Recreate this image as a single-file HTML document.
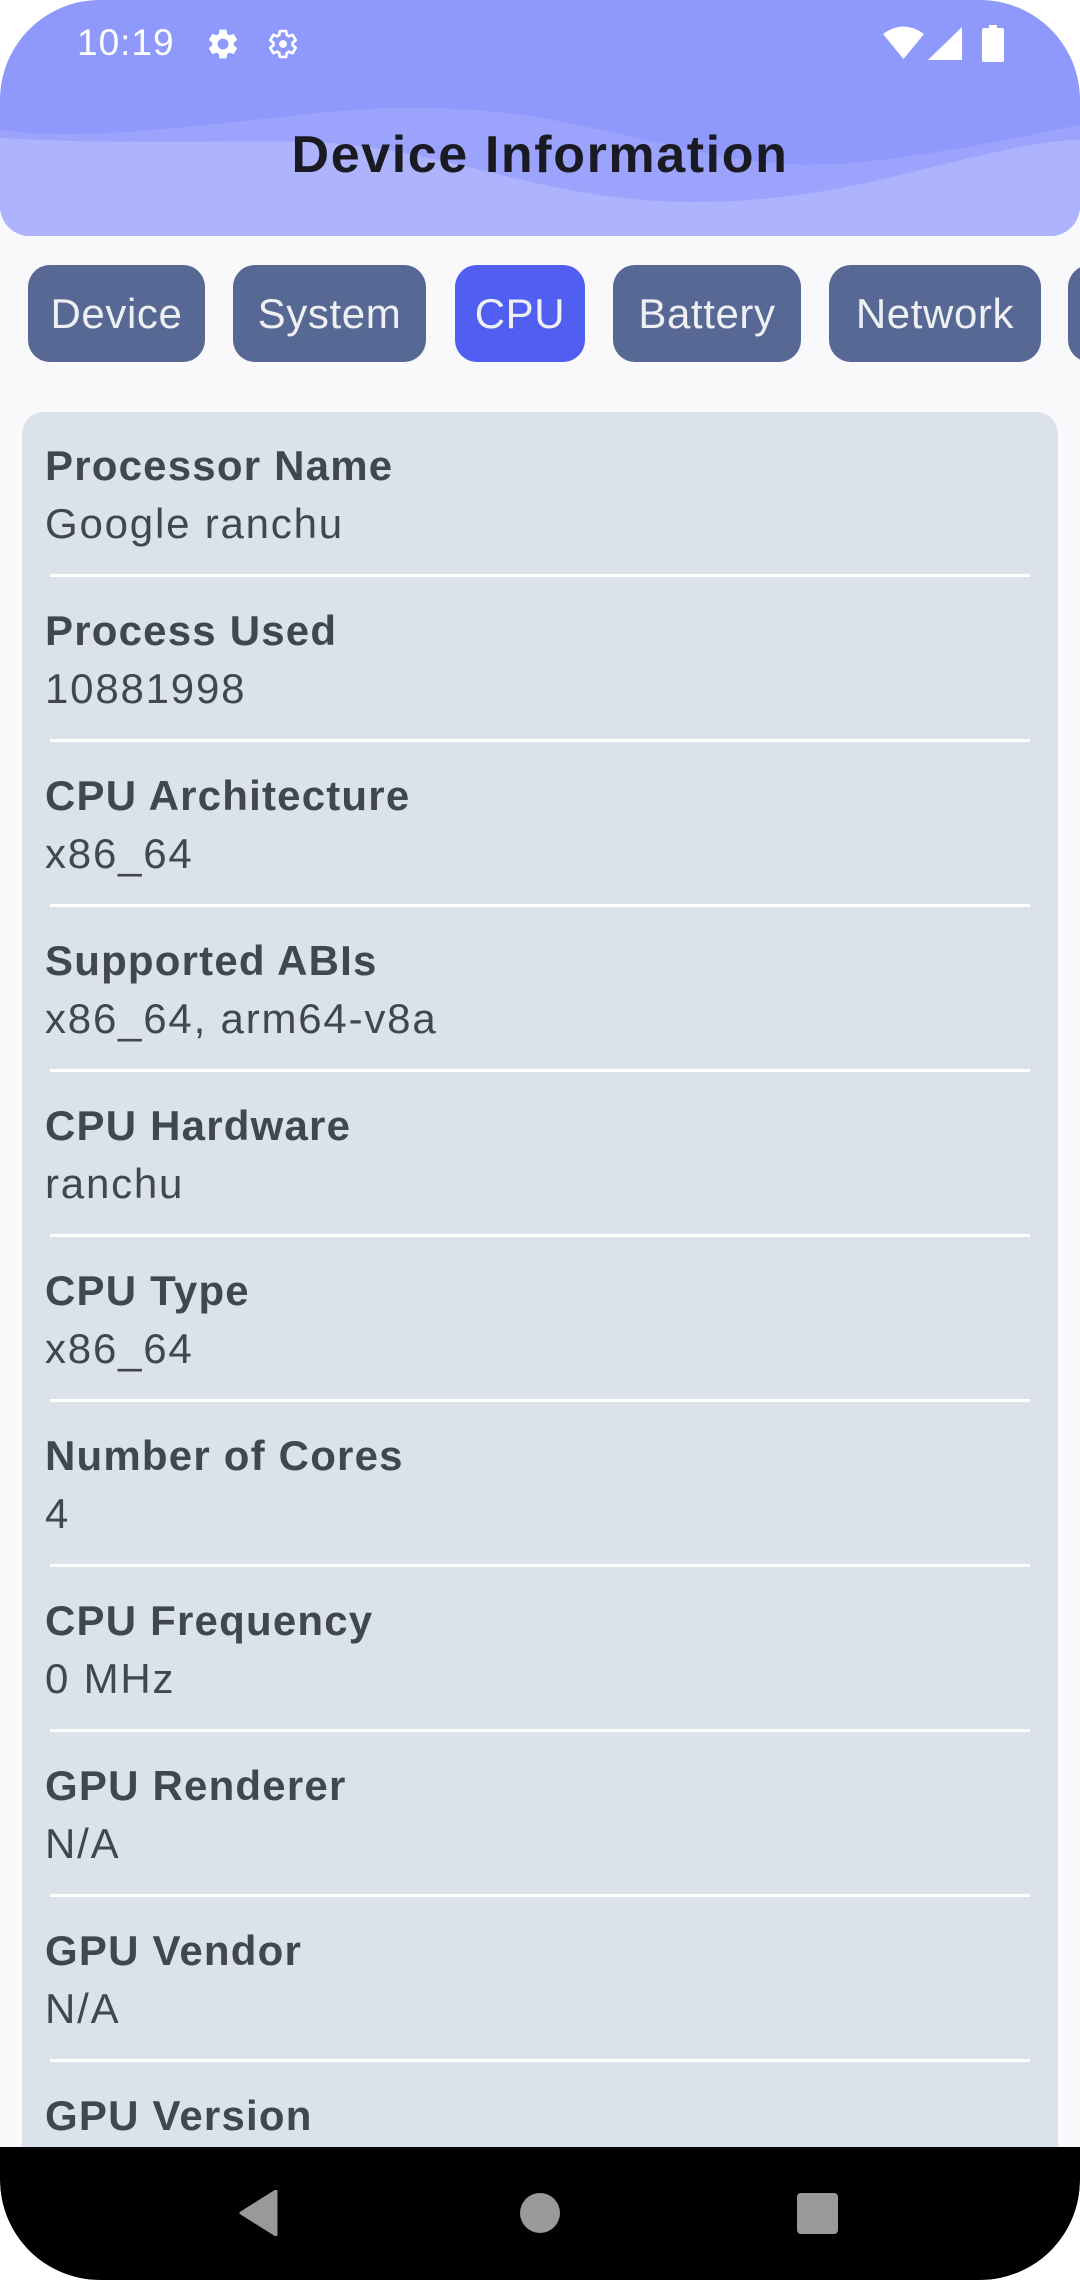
<!DOCTYPE html>
<html><head><meta charset="utf-8"><style>
*{margin:0;padding:0;box-sizing:border-box}
html,body{width:1080px;height:2280px;overflow:hidden;background:#fff}
body{font-family:"Liberation Sans",sans-serif;position:relative}
.screen{position:absolute;left:0;top:0;width:1080px;height:2280px;background:#f9f9fc;border-radius:100px 100px 100px 100px;overflow:hidden}
.hdr{position:absolute;left:0;top:0;width:1080px;height:236px;border-radius:0 0 30px 30px;overflow:hidden;background:#8f99fb}
.title{position:absolute;left:0;width:1080px;top:122px;text-align:center;font-size:52px;font-weight:bold;color:#1a1b22;line-height:66px;letter-spacing:1.6px}
.time{position:absolute;left:77px;top:21px;font-size:37px;color:#fff;line-height:44px;letter-spacing:1px}
.tab{position:absolute;top:265px;height:97px;border-radius:22px;background:#566893;color:#eef0f4;font-size:42px;line-height:97px;text-align:center;letter-spacing:0.6px}
.card{position:absolute;left:22px;top:412px;width:1036px;height:1900px;border-radius:22px;background:#dce2ea}
.lab{position:absolute;left:23px;font-size:42px;font-weight:bold;color:#41474f;line-height:50px;white-space:nowrap;letter-spacing:1.2px}
.val{position:absolute;left:23px;font-size:42px;color:#41474f;line-height:50px;white-space:nowrap;letter-spacing:1.8px}
.div{position:absolute;left:28px;width:980px;height:3px;background:#fff}
.nav{position:absolute;left:0;top:2147px;width:1080px;height:133px;background:#000;border-radius:0 0 100px 100px}
</style></head><body>
<div class="screen">
<div class="hdr">
<svg width="1080" height="236" style="position:absolute;left:0;top:0">
<path d="M0 130 C80 140 160 130 300 115 C420 100 520 110 600 130 C700 150 760 175 880 160 C960 150 1030 135 1080 125 L1080 236 L0 236 Z" fill="#9ba3fc"/>
<path d="M0 138 C120 145 220 140 320 142 C430 150 500 180 600 195 C700 210 800 200 900 175 C980 155 1040 140 1080 140 L1080 236 L0 236 Z" fill="#adb4fd"/>
</svg>
<div class="time">10:19</div>
<svg style="position:absolute;left:205px;top:26px" width="36" height="36" viewBox="0 0 24 24"><path fill="#fff" d="M19.14 12.94c.04-.3.06-.61.06-.94s-.02-.64-.07-.94l2.03-1.580a.49.49 0 0 0 .12-.61l-1.920-3.320a.49.49 0 0 0-.59-.22l-2.390.96a7 7 0 0 0-1.620-.94l-.36-2.540a.48.48 0 0 0-.48-.41h-3.840a.48.48 0 0 0-.47.41l-.36 2.540c-.59.24-1.130.57-1.620.94l-2.390-.96a.48.48 0 0 0-.59.22L2.740 8.870a.47.47 0 0 0 .12.61l2.030 1.580c-.05.3-.09.63-.09.94s.02.64.07.94l-2.030 1.580a.49.49 0 0 0-.12.61l1.920 3.320c.12.22.37.29.59.22l2.390-.96c.5.38 1.030.7 1.620.94l.36 2.540c.05.24.24.41.48.41h3.840c.24 0 .44-.17.47-.41l.36-2.540c.59-.24 1.130-.56 1.620-.94l2.390.96c.22.08.47 0 .59-.22l1.920-3.320a.47.47 0 0 0-.12-.61l-2.010-1.580zM12 15.6A3.6 3.6 0 1 1 12 8.4a3.6 3.6 0 0 1 0 7.2z"/><circle cx="12" cy="12" r="2.2" fill="#8f99fb"/></svg>
<svg style="position:absolute;left:265px;top:26px" width="36" height="36" viewBox="0 0 24 24"><path fill="none" stroke="#fff" stroke-width="2" d="M19.14 12.94c.04-.3.06-.61.06-.94s-.02-.64-.07-.94l2.030-1.580a.49.49 0 0 0 .12-.61l-1.920-3.320a.49.49 0 0 0-.59-.22l-2.390.96a7 7 0 0 0-1.620-.94l-.36-2.540a.48.48 0 0 0-.48-.41h-3.840a.48.48 0 0 0-.47.41l-.36 2.540c-.59.24-1.130.57-1.620.94l-2.390-.96a.48.48 0 0 0-.59.22L2.740 8.870a.47.47 0 0 0 .12.61l2.030 1.580c-.05.3-.09.63-.09.94s.02.64.07.94l-2.030 1.580a.49.49 0 0 0-.12.61l1.920 3.320c.12.22.37.29.59.22l2.390-.96c.5.38 1.030.7 1.620.94l.36 2.540c.05.24.24.41.48.41h3.840c.24 0 .44-.17.47-.41l.36-2.540c.59-.24 1.130-.56 1.620-.94l2.390.96c.22.08.47 0 .59-.22l1.920-3.320a.47.47 0 0 0-.12-.61l-2.010-1.580z" transform="translate(1.2 1.2) scale(.9)"/><circle cx="12" cy="12" r="2.6" fill="#fff"/></svg>
<svg style="position:absolute;left:883px;top:25px" width="41" height="35" viewBox="0 0 41 35"><path d="M0 9 Q20.5 -6 41 9 L20.5 34 Z" fill="#fff"/></svg>
<svg style="position:absolute;left:928px;top:27px" width="34" height="34" viewBox="0 0 34 34"><path d="M34 0 L34 33 L0 33 Z" fill="#fff"/></svg>
<svg style="position:absolute;left:982px;top:25px" width="22" height="37" viewBox="0 0 22 37"><rect x="7" y="0" width="8" height="4" fill="#fff"/><rect x="0" y="3" width="22" height="34" rx="2" fill="#fff"/></svg>
<div class="title">Device Information</div>
</div>

<div class="tab" style="left:28px;width:177px">Device</div>
<div class="tab" style="left:233px;width:193px">System</div>
<div class="tab" style="left:455px;width:130px;background:#515ef2">CPU</div>
<div class="tab" style="left:613px;width:188px">Battery</div>
<div class="tab" style="left:829px;width:212px">Network</div>
<div class="tab" style="left:1068px;width:100px"></div>

<div class="card">
<div style="position:absolute;left:0;top:0;width:1036px">
<div class="lab" style="top:29px">Processor Name</div><div class="val" style="top:87px">Google ranchu</div><div class="div" style="top:162px"></div>
</div>
<div style="position:absolute;left:0;top:165px;width:1036px">
<div class="lab" style="top:29px">Process Used</div><div class="val" style="top:87px">10881998</div><div class="div" style="top:162px"></div>
</div>
<div style="position:absolute;left:0;top:330px;width:1036px">
<div class="lab" style="top:29px">CPU Architecture</div><div class="val" style="top:87px">x86_64</div><div class="div" style="top:162px"></div>
</div>
<div style="position:absolute;left:0;top:495px;width:1036px">
<div class="lab" style="top:29px">Supported ABIs</div><div class="val" style="top:87px">x86_64, arm64-v8a</div><div class="div" style="top:162px"></div>
</div>
<div style="position:absolute;left:0;top:660px;width:1036px">
<div class="lab" style="top:29px">CPU Hardware</div><div class="val" style="top:87px">ranchu</div><div class="div" style="top:162px"></div>
</div>
<div style="position:absolute;left:0;top:825px;width:1036px">
<div class="lab" style="top:29px">CPU Type</div><div class="val" style="top:87px">x86_64</div><div class="div" style="top:162px"></div>
</div>
<div style="position:absolute;left:0;top:990px;width:1036px">
<div class="lab" style="top:29px">Number of Cores</div><div class="val" style="top:87px">4</div><div class="div" style="top:162px"></div>
</div>
<div style="position:absolute;left:0;top:1155px;width:1036px">
<div class="lab" style="top:29px">CPU Frequency</div><div class="val" style="top:87px">0 MHz</div><div class="div" style="top:162px"></div>
</div>
<div style="position:absolute;left:0;top:1320px;width:1036px">
<div class="lab" style="top:29px">GPU Renderer</div><div class="val" style="top:87px">N/A</div><div class="div" style="top:162px"></div>
</div>
<div style="position:absolute;left:0;top:1485px;width:1036px">
<div class="lab" style="top:29px">GPU Vendor</div><div class="val" style="top:87px">N/A</div><div class="div" style="top:162px"></div>
</div>
<div style="position:absolute;left:0;top:1650px;width:1036px">
<div class="lab" style="top:29px">GPU Version</div>
</div>
</div>

<div class="nav">
<svg style="position:absolute;left:238px;top:43px" width="42" height="46" viewBox="0 0 42 46"><path d="M38 1 L38 45 L3 23 Z" fill="#999" stroke="#999" stroke-width="3" stroke-linejoin="round"/></svg>
<div style="position:absolute;left:520px;top:46px;width:40px;height:40px;border-radius:50%;background:#999"></div>
<div style="position:absolute;left:797px;top:46px;width:41px;height:41px;border-radius:4px;background:#999"></div>
</div>
</div>
</body></html>
